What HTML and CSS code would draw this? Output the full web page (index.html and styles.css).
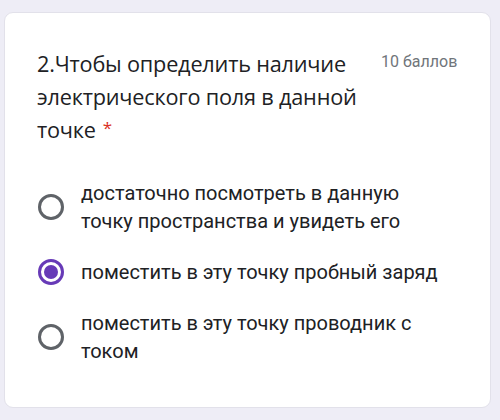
FILE: index.html
```html
<!doctype html>
<html lang="ru">
<head>
	<meta charset="UTF-8">
	<title>Вопрос 2</title>
	<link rel="stylesheet" href="styles.css">
</head>
<body>
<div class="page">
	<div class="card">
		<div class="head">
			<div class="title">2.Чтобы определить наличие электрического поля в данной точке<span class="req">*</span></div>
			<div class="points">10 баллов</div>
		</div>
		<ul class="options">
			<li class="option">
				<span class="radio"></span>
				<span class="label">достаточно посмотреть в данную точку пространства и увидеть его</span>
			</li>
			<li class="option checked">
				<span class="radio"></span>
				<span class="label">поместить в эту точку пробный заряд</span>
			</li>
			<li class="option">
				<span class="radio"></span>
				<span class="label">поместить в эту точку проводник с током</span>
			</li>
		</ul>
	</div>
</div>
</body>
</html>
```

FILE: styles.css
```css
*{
  margin:0;
  padding:0;
}
body{
  background:#eeedf6;
  font-family:Roboto, "Noto Sans", sans-serif;
  color:#202124;
}
.page{
  padding:12px 9px 10px 4px;
}
.card{
  background:#fff;
  border:1px solid #e2e1ea;
  border-radius:9px;
  height:396px;
  padding:34px 0 0 32px;
  box-sizing:border-box;
}
.head{
  display:flex;
  align-items:flex-start;
}
.title{
  width:336px;
  font-family:"Open Sans", Roboto, sans-serif;
  font-size:21.7px;
  line-height:33px;
  letter-spacing:-0.2px;
}
.req{
  display:inline-block;
  margin-left:7px;
  color:#d93025;
  font-size:17px;
  line-height:17px;
  vertical-align:4px;
  letter-spacing:0;
}
.points{
  margin-left:8px;
  padding-top:5px;
  font-size:16px;
  color:#70757a;
}
.options{
  list-style:none;
  margin-top:33px;
}
.option{
  display:flex;
  align-items:center;
  gap:17px;
  margin-bottom:23px;
}
.radio{
  flex:none;
  width:20px;
  height:20px;
  margin-left:1px;
  border:3px solid #5f6368;
  border-radius:50%;
  position:relative;
}
.checked .radio{
  border-color:#673ab7;
}
.checked .radio::after{
  content:"";
  position:absolute;
  left:3px;
  top:3px;
  width:14px;
  height:14px;
  border-radius:50%;
  background:#673ab7;
}
.label{
  width:360px;
  font-size:20px;
  line-height:28px;
}
```
